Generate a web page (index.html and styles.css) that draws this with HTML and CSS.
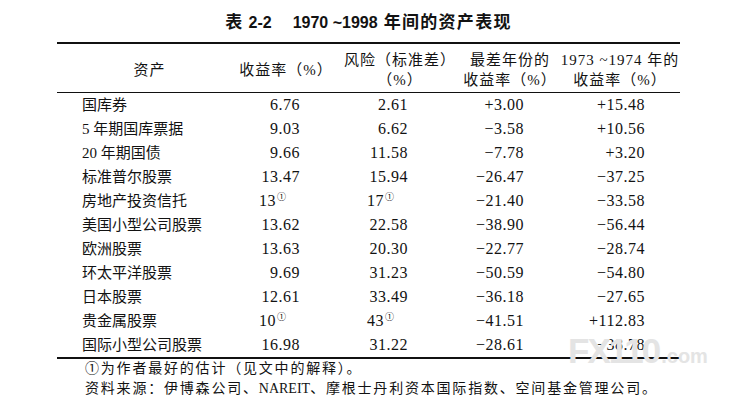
FILE: index.html
```html
<!DOCTYPE html>
<html lang="zh-CN">
<head>
<meta charset="utf-8">
<title>表 2-2 1970 ~1998 年间的资产表现</title>
<link rel="stylesheet" href="styles.css">
</head>
<body>
<div class="page">
  <h1 class="title"><span class="t-cn">表</span><span class="t-num">2-2</span><span class="t-num t-years">1970 ~1998</span><span class="t-cn t-rest">年间的资产表现</span></h1>
  <div class="table-wrap">
    <table class="assets">
      <thead>
        <tr>
          <th class="c1">资产</th>
          <th class="c2">收益率（%）</th>
          <th class="c3">风险（标准差）<br>（%）</th>
          <th class="c4">最差年份的<br>收益率（%）</th>
          <th class="c5">1973 ~1974 年的<br>收益率（%）</th>
        </tr>
      </thead>
      <tbody>
        <tr><td class="label">国库券</td><td class="num n2">6.76</td><td class="num n3">2.61</td><td class="num n4">+3.00</td><td class="num n5">+15.48</td></tr>
        <tr><td class="label">5 年期国库票据</td><td class="num n2">9.03</td><td class="num n3">6.62</td><td class="num n4">−3.58</td><td class="num n5">+10.56</td></tr>
        <tr><td class="label">20 年期国债</td><td class="num n2">9.66</td><td class="num n3">11.58</td><td class="num n4">−7.78</td><td class="num n5">+3.20</td></tr>
        <tr><td class="label">标准普尔股票</td><td class="num n2">13.47</td><td class="num n3">15.94</td><td class="num n4">−26.47</td><td class="num n5">−37.25</td></tr>
        <tr><td class="label">房地产投资信托</td><td class="num est e2">13<sup class="fn">①</sup></td><td class="num est e3">17<sup class="fn">①</sup></td><td class="num n4">−21.40</td><td class="num n5">−33.58</td></tr>
        <tr><td class="label">美国小型公司股票</td><td class="num n2">13.62</td><td class="num n3">22.58</td><td class="num n4">−38.90</td><td class="num n5">−56.44</td></tr>
        <tr><td class="label">欧洲股票</td><td class="num n2">13.63</td><td class="num n3">20.30</td><td class="num n4">−22.77</td><td class="num n5">−28.74</td></tr>
        <tr><td class="label">环太平洋股票</td><td class="num n2">9.69</td><td class="num n3">31.23</td><td class="num n4">−50.59</td><td class="num n5">−54.80</td></tr>
        <tr><td class="label">日本股票</td><td class="num n2">12.61</td><td class="num n3">33.49</td><td class="num n4">−36.18</td><td class="num n5">−27.65</td></tr>
        <tr><td class="label">贵金属股票</td><td class="num est e2">10<sup class="fn">①</sup></td><td class="num est e3">43<sup class="fn">①</sup></td><td class="num n4">−41.51</td><td class="num n5">+112.83</td></tr>
        <tr><td class="label">国际小型公司股票</td><td class="num n2">16.98</td><td class="num n3">31.22</td><td class="num n4">−28.61</td><td class="num n5">−38.78</td></tr>
      </tbody>
    </table>
    <div class="watermark"><span class="wm-big">FX110</span><span class="wm-small">.com</span></div>
  </div>
  <div class="notes">
    <p>①为作者最好的估计（见文中的解释）。</p>
    <p>资料来源：伊博森公司、<span class="latin">NAREIT</span>、摩根士丹利资本国际指数、空间基金管理公司。</p>
  </div>
</div>
</body>
</html>
```

FILE: styles.css
```css
* { box-sizing: border-box; }

body {
  margin: 0;
  background: #ffffff;
  color: #121212;
  font-family: "Liberation Serif", "Noto Sans CJK SC", serif;
  font-size: 15px;
}

.page {
  width: 623px;
  margin-left: 57px;
}

.title {
  margin: 13px 0 9px;
  text-align: center;
  line-height: 20px;
  font-family: "Liberation Sans", "Noto Sans CJK SC", sans-serif;
  font-weight: 700;
  font-size: 16px;
  white-space: nowrap;
}

.t-cn { font-size: 17px; letter-spacing: 1.3px; }
.t-num { margin-left: 5px; }
.t-years { margin-left: 21px; }
.t-rest { margin-left: 6px; }

.table-wrap { position: relative; }

.assets {
  width: 623px;
  border-collapse: collapse;
  table-layout: fixed;
  border-top: 2px solid #111;
  border-bottom: 2px solid #111;
}

.assets th {
  font-weight: normal;
  padding: 6px 0 2px;
  line-height: 20px;
  border-bottom: 1px solid #111;
  text-align: center;
  vertical-align: middle;
  letter-spacing: 1px;
  white-space: nowrap;
}

.c1 { width: 175px; padding-left: 10px !important; }
.c2 { width: 108px; }
.c3 { width: 120px; }
.c4 { width: 100px; }
.c5 { width: 120px; }

.assets td {
  height: 24px;
  padding: 0;
  line-height: 24px;
  white-space: nowrap;
}

.label { padding-left: 25px !important; }

.num {
  text-align: right;
  font-size: 16px;
  letter-spacing: 0.5px;
}

.n2 { padding-right: 40px !important; }
.n3 { padding-right: 52px !important; }
.n4 { padding-right: 36px !important; }
.n5 { padding-right: 35px !important; }

.est { text-align: left; }
.e2 { padding-left: 27px !important; }
.e3 { padding-left: 27px !important; }

.fn {
  font-size: 9px;
  line-height: 0;
  vertical-align: 6px;
  margin-left: 1px;
}

.watermark {
  position: absolute;
  left: 511px;
  top: 291px;
  color: #e4e4e4;
  font-family: "Liberation Sans", sans-serif;
  font-weight: 700;
  white-space: nowrap;
  line-height: 1;
}

.wm-big { font-size: 35px; letter-spacing: -2px; }
.wm-small { font-size: 20px; margin-left: 2px; }

.notes {
  margin-left: 28px;
  font-size: 14px;
  letter-spacing: 1.8px;
  line-height: 20px;
}

.notes p { margin: 0; }

.latin { letter-spacing: 0; }
```
